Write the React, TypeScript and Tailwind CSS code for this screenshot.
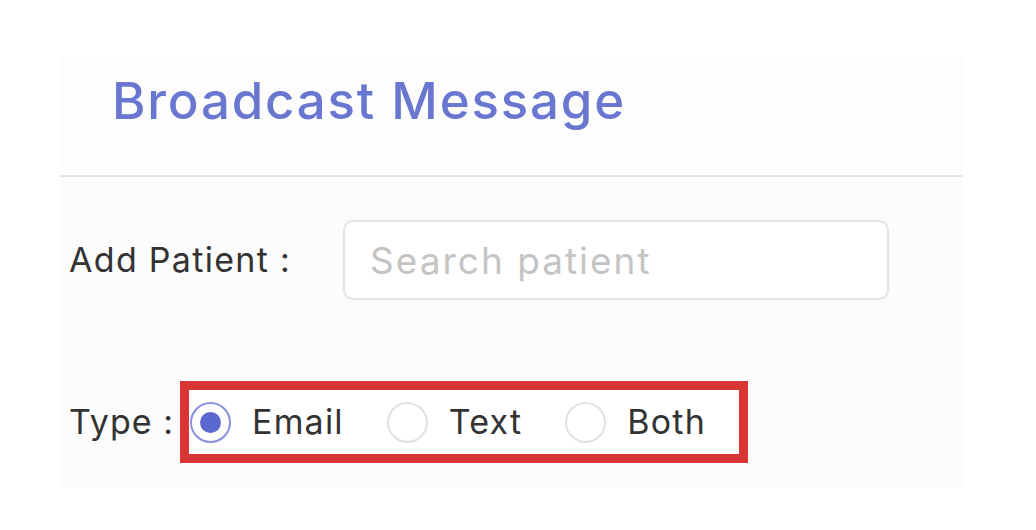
import { useState } from 'react';

type MessageType = 'email' | 'text' | 'both';

const TYPES: { id: MessageType; label: string }[] = [
  { id: 'email', label: 'Email' },
  { id: 'text', label: 'Text' },
  { id: 'both', label: 'Both' },
];

function Radio({ checked }: { checked: boolean }) {
  return checked ? (
    <span className="flex h-[41px] w-[41px] shrink-0 items-center justify-center rounded-full border-2 border-[#8790dc] bg-white">
      <span className="h-[21px] w-[21px] rounded-full bg-[#5b68cf]" />
    </span>
  ) : (
    <span className="h-[41px] w-[41px] shrink-0 rounded-full border-2 border-[#e2e2e2] bg-white" />
  );
}

export default function App() {
  const [type, setType] = useState<MessageType>('email');

  return (
    <div className="h-[530px] w-[1036px] bg-white pt-[56px] pl-[60px] font-['Inter',sans-serif]">
      <div className="w-[903px] bg-[#fcfcfc] pb-[25px]">
        {/* Header */}
        <div className="flex h-[119px] items-center bg-[#fdfdfd] pl-[52px] pb-[30px]">
          <h1 className="text-[51px] font-medium leading-none tracking-[1.8px] text-[#6a77d1]">
            Broadcast Message
          </h1>
        </div>
        <div className="h-[2px] bg-[#e6e6e6]" />

        {/* Add patient */}
        <div className="flex items-center pt-[43px] pl-[9px]">
          <label className="w-[274px] text-[34px] leading-none tracking-[1.3px] text-[#333333]">
            Add Patient :
          </label>
          <input
            type="text"
            placeholder="Search patient"
            className="h-[80px] w-[546px] rounded-[10px] border-2 border-[#e3e3e3] bg-white px-[25px] text-[37px] tracking-[2px] text-[#333333] outline-none placeholder:text-[#c4c4c4]"
          />
        </div>

        {/* Type */}
        <div className="flex items-center pt-[81px] pl-[9px]">
          <span className="w-[111px] text-[34px] leading-none tracking-[1px] text-[#333333]">
            Type :
          </span>
          <div className="flex h-[82px] w-[568px] items-center gap-[43px] border-[9px] border-[#d93535] bg-white pl-[1px]">
            {TYPES.map((t) => (
              <button
                key={t.id}
                onClick={() => setType(t.id)}
                className="flex items-center gap-[21px]"
              >
                <Radio checked={type === t.id} />
                <span className="text-[34px] leading-none tracking-[1.2px] text-[#333333]">
                  {t.label}
                </span>
              </button>
            ))}
          </div>
        </div>
      </div>
    </div>
  );
}
